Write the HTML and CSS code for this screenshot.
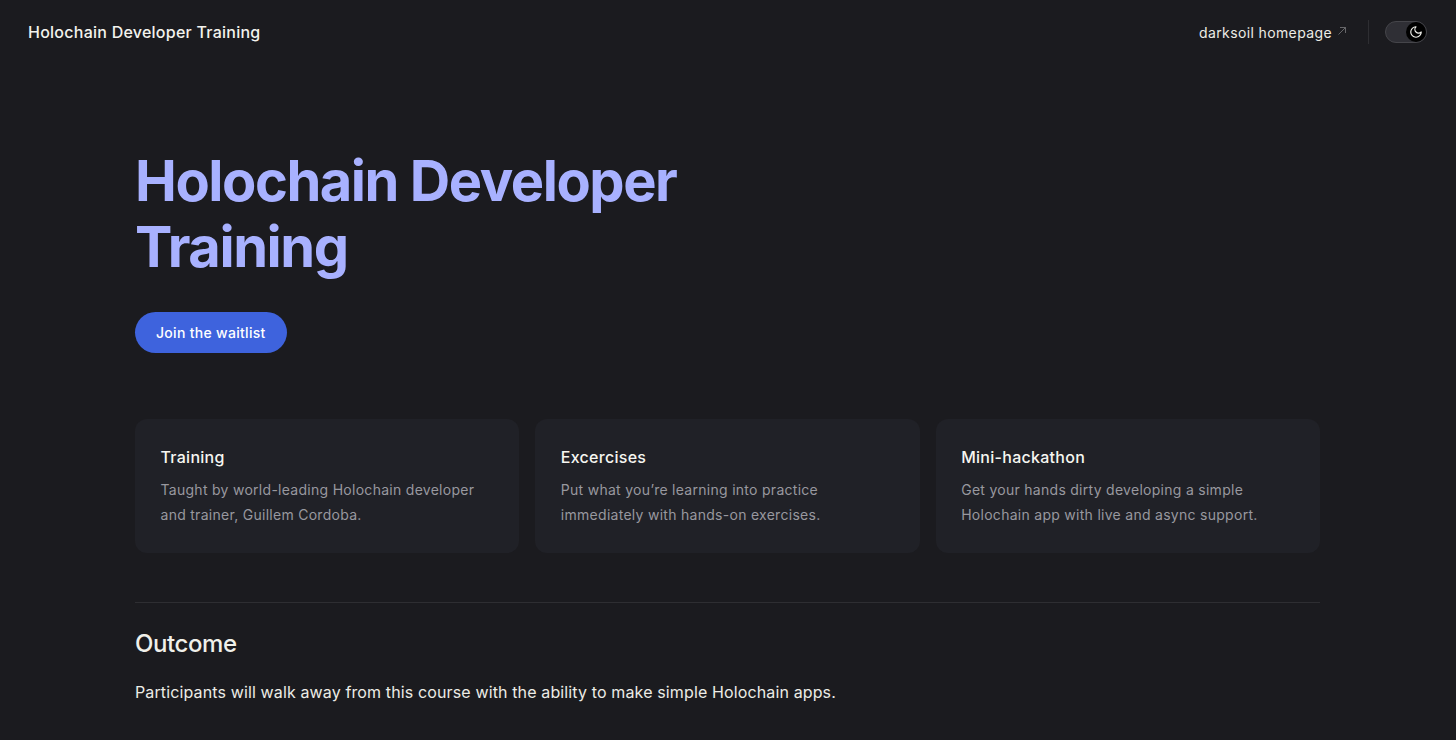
FILE: index.html
```html
<!DOCTYPE html>
<html lang="en">
<head>
<meta charset="utf-8">
<title>Holochain Developer Training</title>
<link rel="stylesheet" href="styles.css">
</head>
<body>
<header class="nav">
  <a class="brand">Holochain Developer Training</a>
  <div class="nav-right">
    <a class="nav-link">darksoil homepage
      <svg class="ext" viewBox="0 0 10 10" width="10" height="10"><path d="M1.5 8.5 L8.5 1.5 M3 1.5 H8.5 V7" fill="none" stroke="currentColor" stroke-width="0.9"/></svg>
    </a>
    <span class="divider"></span>
    <div class="switch">
      <span class="knob">
        <svg viewBox="0 0 24 24" width="14" height="14"><path d="M12 3a6 6 0 0 0 9 9 9 9 0 1 1-9-9Z" fill="none" stroke="currentColor" stroke-width="2" stroke-linecap="round" stroke-linejoin="round"/></svg>
      </span>
    </div>
  </div>
</header>
<main class="main">
  <h1 class="title">Holochain Developer<br>Training</h1>
  <a class="cta">Join the waitlist</a>
  <section class="cards">
    <article class="card">
      <h2 class="card-title">Training</h2>
      <p class="card-text">Taught by world-leading Holochain developer and trainer, Guillem Cordoba.</p>
    </article>
    <article class="card">
      <h2 class="card-title">Excercises</h2>
      <p class="card-text">Put what you’re learning into practice immediately with hands-on exercises.</p>
    </article>
    <article class="card">
      <h2 class="card-title">Mini-hackathon</h2>
      <p class="card-text">Get your hands dirty developing a simple Holochain app with live and async support.</p>
    </article>
  </section>
  <section class="outcome">
    <h2 class="outcome-title">Outcome</h2>
    <p class="outcome-text">Participants will walk away from this course with the ability to make simple Holochain apps.</p>
  </section>
</main>
</body>
</html>
```
FILE: styles.css
```css
* { box-sizing: border-box; }
html, body { height: 100%; }
body {
  margin: 0;
  background: #1b1b1f;
  color: rgba(255, 255, 245, 0.86);
  font-family: Inter, "Liberation Sans", sans-serif;
  font-size: 16px;
  overflow: hidden;
}
.nav {
  height: 64px;
  display: flex;
  align-items: center;
  justify-content: space-between;
  padding: 0 29px 0 28px;
}
.brand { font-size: 16px; font-weight: 500; letter-spacing: 0.25px; color: #f3f3ee; line-height: 64px; }
.nav-right { display: flex; align-items: center; }
.nav-link {
  display: flex;
  align-items: center;
  gap: 5px;
  font-size: 14px;
  font-weight: 400;
  letter-spacing: 0.38px;
  color: #ecece6;
}
.ext { color: #6f6f72; position: relative; top: -1px; }
.divider { width: 1px; height: 24px; background: #2e2e32; margin: 0 16px 0 21px; }
.switch {
  width: 42px;
  height: 22px;
  border-radius: 11px;
  background: #2f2f35;
  border: 1px solid #45454a;
  display: flex;
  justify-content: flex-end;
  align-items: center;
}
.knob {
  width: 20px;
  height: 20px;
  border-radius: 50%;
  background: #000;
  color: #f3f3ee;
  display: flex;
  align-items: center;
  justify-content: center;
}
.main { padding: 84px 136px 0 135px; }
.title {
  margin: 0;
  font-size: 56px;
  line-height: 66px;
  font-weight: 700;
  letter-spacing: -1.45px;
  color: #a8b1ff;
}
.cta {
  display: inline-block;
  margin-top: 32px;
  height: 41px;
  line-height: 41px;
  padding: 0 21px;
  border-radius: 21px;
  background: #3e63dd;
  color: #fff;
  font-size: 14px;
  font-weight: 500;
  letter-spacing: 0.3px;
}
.cards {
  margin-top: 66px;
  display: grid;
  grid-template-columns: repeat(3, 1fr);
  gap: 16px;
}
.card {
  background: #202127;
  border-radius: 12px;
  padding: 26px 26px 26px 25.5px;
  height: 134px;
}
.card-title {
  margin: 0;
  font-size: 16px;
  line-height: 24px;
  font-weight: 500;
  letter-spacing: 0.28px;
  color: #f6f6f1;
}
.card-text {
  margin: 9px 0 0;
  font-size: 14px;
  line-height: 24.5px;
  letter-spacing: 0.28px;
  color: #98989f;
}
.outcome { margin-top: 49px; border-top: 1px solid #2e2e32; padding-top: 25px; }
.outcome-title {
  margin: 0;
  font-size: 24px;
  line-height: 32px;
  font-weight: 500;
  letter-spacing: -0.4px;
  color: #f0f0ea;
}
.outcome-text { margin: 18px 0 0; font-size: 16px; line-height: 28px; letter-spacing: 0.13px; color: #ecece6; }
```
